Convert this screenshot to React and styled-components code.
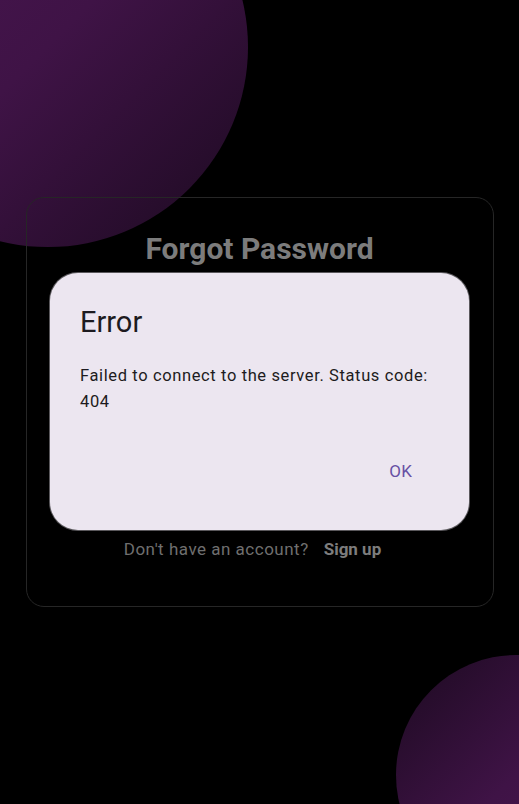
import React from 'react';
import styled, { createGlobalStyle } from 'styled-components';

const Global = createGlobalStyle`
  html, body {
    margin: 0;
    padding: 0;
    background: #000;
  }
  body {
    font-family: Roboto, "Liberation Sans", sans-serif;
  }
`;

const Screen = styled.div`
  position: relative;
  width: 519px;
  height: 804px;
  overflow: hidden;
  background: #000;
  display: flex;
  justify-content: center;
  padding-top: 197px;
  box-sizing: border-box;
`;

const Blob = styled.div`
  position: absolute;
  border-radius: 50%;
  width: ${(p) => p.size}px;
  height: ${(p) => p.size}px;
  left: ${(p) => p.x}px;
  top: ${(p) => p.y}px;
  background: linear-gradient(${(p) => p.angle}deg, #4b1653 0%, #3f1346 50%, #1c0a20 100%);
`;

const Card = styled.div`
  position: relative;
  width: 468px;
  height: 410px;
  box-sizing: border-box;
  border: 1px solid #262626;
  border-radius: 18px;
  display: flex;
  flex-direction: column;
  align-items: center;
  padding-top: 32px;
`;

const Title = styled.h1`
  margin: 0;
  font-size: 30px;
  font-weight: 700;
  color: #7c7c7c;
  line-height: 38px;
`;

const Dialog = styled.div`
  margin-top: 5px;
  width: 419px;
  height: 257px;
  box-sizing: border-box;
  background: #ece6f0;
  border-radius: 28px;
  padding: 30px 30px 0 30px;
  display: flex;
  flex-direction: column;
  box-shadow: 0 0 0 1px #5a585c;
`;

const DialogTitle = styled.h2`
  margin: 0;
  font-size: 29px;
  font-weight: 400;
  color: #1d1b20;
  line-height: 38px;
`;

const DialogBody = styled.p`
  margin: 22px 0 0;
  font-size: 16.5px;
  line-height: 26px;
  letter-spacing: 0.62px;
  color: #1d1b20;
`;

const Actions = styled.div`
  margin-top: auto;
  margin-bottom: 49px;
  display: flex;
  justify-content: flex-end;
`;

const TextButton = styled.button`
  border: none;
  background: none;
  font-family: inherit;
  font-size: 17px;
  font-weight: 400;
  color: #6750a4;
  padding: 0 27px 0 0;
  letter-spacing: 0.2px;
`;

const Footer = styled.div`
  margin-top: 9px;
  display: flex;
  align-items: center;
  gap: 15px;
  font-size: 17px;
  color: #6f6f6f;
`;

const Prompt = styled.span`
  letter-spacing: 0.5px;
`;

const SignUp = styled.span`
  font-weight: 700;
  color: #7d7d7d;
  padding-right: 14px;
`;

export default function App() {
  return (
    <>
      <Global />
      <Screen>
        <Blob size={400} x={-152} y={-153} angle={135} />
        <Blob size={240} x={396} y={655} angle={315} />
        <Card>
          <Title>Forgot Password</Title>
          <Dialog>
            <DialogTitle>Error</DialogTitle>
            <DialogBody>Failed to connect to the server. Status code: 404</DialogBody>
            <Actions>
              <TextButton>OK</TextButton>
            </Actions>
          </Dialog>
          <Footer>
            <Prompt>Don't have an account?</Prompt>
            <SignUp>Sign up</SignUp>
          </Footer>
        </Card>
      </Screen>
    </>
  );
}
